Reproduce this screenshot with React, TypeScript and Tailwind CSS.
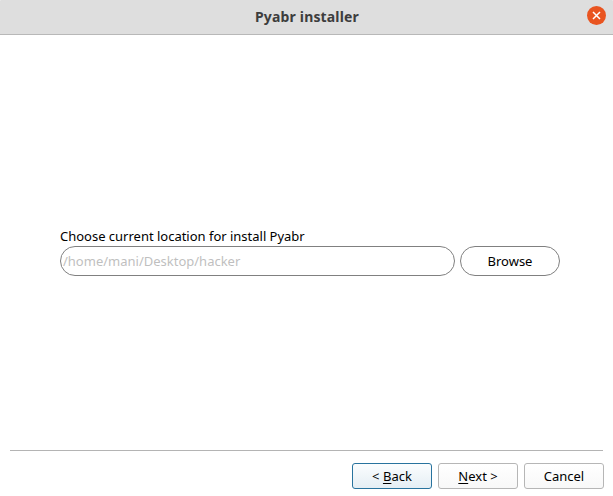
import React from "react";

function WizardButton({ children, primary = false }: { children: React.ReactNode; primary?: boolean }) {
  return (
    <button
      className={`flex h-[26px] w-20 items-center justify-center rounded-[3px] border bg-gradient-to-b pb-px ${
        primary ? "border-[#28739e] from-[#fbfdfe] to-[#e5eef4]" : "border-[#b6b6b6] from-white to-[#f8f8f8]"
      }`}
    >
      <span className="whitespace-pre">{children}</span>
    </button>
  );
}

function Mnemonic({ children }: { children: string }) {
  return <span className="underline decoration-1 underline-offset-[2px]">{children}</span>;
}

export default function App() {
  return (
    <div className="flex h-[496px] w-[613px] flex-col overflow-hidden bg-white font-['Noto_Sans',sans-serif] text-[13px] leading-[18px] text-black">
      <header className="grid h-[35px] shrink-0 grid-cols-[1fr_auto_1fr] items-center rounded-t-[1px] border-b border-[#b8b8b8] bg-[#dedede] pr-[7px]">
        <span />
        <h1 className="pl-[8px] text-[14px] font-bold tracking-[0.16px] text-[#3d3d3d]">Pyabr installer</h1>
        <button className="mb-[3px] flex size-[19px] items-center justify-center justify-self-end rounded-full bg-[#e95420]">
          <svg viewBox="0 0 9 9" className="size-[9px]" fill="none" stroke="white" strokeWidth="1.5">
            <path d="M1 1l7 7M8 1L1 8" />
          </svg>
        </button>
      </header>
      <main className="flex grow flex-col pl-[60px] pt-[192px]">
        <label className="mb-px h-[18px] tracking-[-0.01px]">Choose current location for install Pyabr</label>
        <div className="flex gap-[5px]">
          <div className="flex h-[30px] w-[395px] items-center rounded-full border border-[#808080] pl-[2px] text-[#bfbfbf]">
            /home/mani/Desktop/hacker
          </div>
          <button className="h-[30px] w-[100px] rounded-full border border-[#808080]">Browse</button>
        </div>
      </main>
      <footer className="ml-[10px] flex h-[46px] shrink-0 flex-col pr-[9px]">
        <div className="mr-px h-px shrink-0 bg-[#b4b4b4]" />
        <div className="flex justify-end gap-[6px] pt-3">
          <WizardButton primary>
            &lt; <Mnemonic>B</Mnemonic>ack
          </WizardButton>
          <WizardButton>
            <Mnemonic>N</Mnemonic>ext &gt;
          </WizardButton>
          <WizardButton>Cancel</WizardButton>
        </div>
      </footer>
    </div>
  );
}
